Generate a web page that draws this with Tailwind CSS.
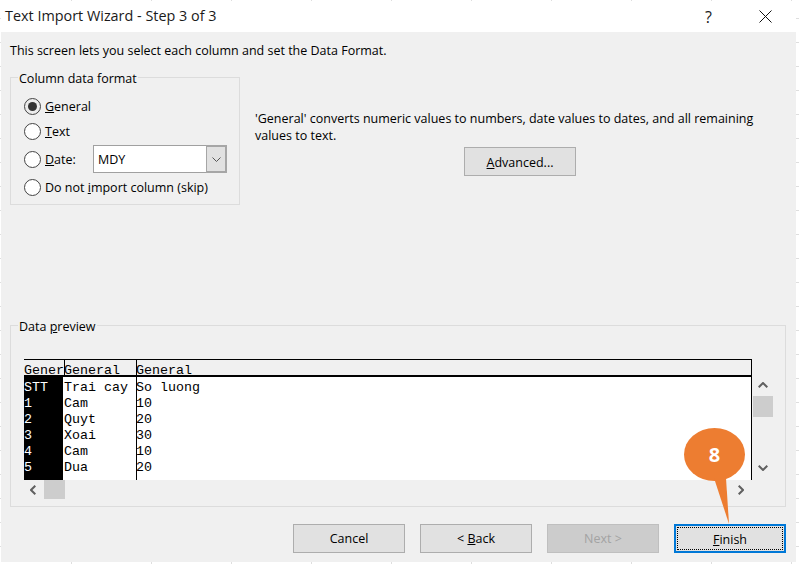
<!DOCTYPE html>
<html lang="en">
<head>
  <meta charset="UTF-8" />
  <title>Text Import Wizard - Step 3 of 3</title>
  <script src="https://cdn.jsdelivr.net/npm/@tailwindcss/browser@4"></script>
</head>
<body class="bg-white">
  <div class="relative w-[799px] h-[564px] overflow-hidden pl-px pt-px font-['Open_Sans',sans-serif] text-[12.5px] text-black [background-image:linear-gradient(#dedede_1px,transparent_1px),linear-gradient(90deg,#dedede_1px,transparent_1px)] [background-size:80px_24px] [background-position:71px_18px]">
    <div class="w-[795px] h-[561px] flex flex-col bg-[#f0f0f0]">

      <!-- Title bar -->
      <div class="h-[31px] shrink-0 bg-white flex items-center pl-1 text-[14.4px] text-[#1a1a1a]">
        <span class="-mt-[2px]">Text Import Wizard - Step 3 of 3</span>
        <span class="ml-auto mr-[47px] text-[16px] leading-none">?</span>
        <svg class="mr-6 w-[13px] h-[13px]" viewBox="0 0 13 13" fill="none" stroke="#111" stroke-width="1"><path d="M0.5 0.5L12.5 12.5M12.5 0.5L0.5 12.5"/></svg>
      </div>

      <div class="pl-[9px] pr-[10px]">
        <p class="h-[18px] mt-[10px] leading-[18px]">This screen lets you select each column and set the Data Format.</p>

        <div class="flex mt-[17px] h-[128px]">
          <!-- Column data format -->
          <div class="relative w-[230px] border border-[#dcdcdc] pl-[13px] pt-[16px]">
            <span class="absolute left-[7px] -top-[8px] px-px leading-[18px] bg-[#f0f0f0]">Column data format</span>

            <div class="flex items-center h-6 gap-1">
              <span class="w-[17px] h-[17px] rounded-full border-[1.5px] border-[#444] bg-[#ececec] flex items-center justify-center"><span class="w-[9px] h-[9px] rounded-full bg-[#333]"></span></span>
              <span class="pt-[2px]"><u>G</u>eneral</span>
            </div>
            <div class="flex items-center h-6 gap-1 mt-px">
              <span class="w-[17px] h-[17px] rounded-full border-[1.5px] border-[#444] bg-white"></span>
              <span class="pt-[2px]"><u>T</u>ext</span>
            </div>
            <div class="flex items-center h-7 gap-1 mt-[2px]">
              <span class="w-[17px] h-[17px] rounded-full border-[1.5px] border-[#444] bg-white"></span>
              <span class="w-[44px] pt-[2px]"><u>D</u>ate:</span>
              <div class="w-[134px] h-7 flex bg-white border border-[#a0a0a0]">
                <span class="flex-1 pl-1 leading-[28px]">MDY</span>
                <span class="w-[21px] bg-[#e1e1e1] border-2 border-l-1 border-[#a6a6a6] -my-px -mr-px flex items-center justify-center">
                  <svg class="w-[9px] h-[5px]" viewBox="0 0 9 5" fill="none" stroke="#555" stroke-width="1"><path d="M0.5 0.5L4.5 4.5L8.5 0.5"/></svg>
                </span>
              </div>
            </div>
            <div class="flex items-center h-6 gap-1 mt-[2px]">
              <span class="w-[17px] h-[17px] rounded-full border-[1.5px] border-[#444] bg-white"></span>
              <span class="pt-[2px]">Do not <u>i</u>mport column (skip)</span>
            </div>
          </div>

          <!-- General description -->
          <div class="ml-[15px] flex-1 pt-[33px]">
            <p class="leading-[17px]">'General' converts numeric values to numbers, date values to dates, and all remaining<br />values to text.</p>
            <button class="block w-[112px] h-[29px] mt-[3px] ml-[209px] pt-[4px] bg-[#e1e1e1] border border-[#adadad]"><u>A</u>dvanced...</button>
          </div>
        </div>

        <!-- Data preview -->
        <div class="relative mt-[120px] h-[182px] border border-[#dcdcdc] pl-[13px] pt-[33px]">
          <span class="absolute left-[7px] -top-[8px] px-px leading-[18px] bg-[#f0f0f0]">Data <u>p</u>review</span>
          <div class="flex">
            <div class="w-[728px] h-[121px] bg-white border-r border-black overflow-hidden font-['Liberation_Mono',monospace] text-[13.33px] leading-4">
              <div class="flex h-[18px] border-t border-b-2 border-black bg-[#f0f0f0]">
                <span class="w-10 shrink-0 pt-[3px]">Gener</span>
                <span class="w-[72px] border-l border-black pt-[3px] -indent-px">General</span>
                <span class="border-l border-black pt-[3px] -indent-px">General</span>
              </div>
              <div class="flex h-[103px]">
                <div class="w-[39px] bg-black text-white pt-[3px] overflow-hidden">
                  <div>STT</div><div>1</div><div>2</div><div>3</div><div>4</div><div>5</div>
                </div>
                <div class="w-[73px] ml-px border-r border-black pt-[3px]">
                  <div>Trai cay</div><div>Cam</div><div>Quyt</div><div>Xoai</div><div>Cam</div><div>Dua</div>
                </div>
                <div class="-ml-px pt-[3px]">
                  <div>So luong</div><div>10</div><div>20</div><div>30</div><div>10</div><div>20</div>
                </div>
              </div>
            </div>
            <!-- Vertical scrollbar -->
            <div class="w-[20px] ml-px h-[121px] flex flex-col items-center">
              <svg class="mt-[23px] w-[10px] h-[6px]" viewBox="0 0 10 6" fill="none" stroke="#606060" stroke-width="2"><path d="M0.7 5.3L5 1L9.3 5.3"/></svg>
              <div class="mt-[8px] w-full h-[21px] bg-[#cdcdcd]"></div>
              <svg class="mt-[48px] w-[10px] h-[6px]" viewBox="0 0 10 6" fill="none" stroke="#606060" stroke-width="2"><path d="M0.7 0.7L5 5L9.3 0.7"/></svg>
            </div>
          </div>
          <!-- Horizontal scrollbar -->
          <div class="flex items-center w-[728px] h-[19px]">
            <svg class="ml-[6px] w-[6px] h-[10px]" viewBox="0 0 6 10" fill="none" stroke="#606060" stroke-width="2"><path d="M5.3 0.7L1 5L5.3 9.3"/></svg>
            <div class="ml-[8px] w-[21px] h-full bg-[#cdcdcd]"></div>
            <svg class="ml-[673px] w-[6px] h-[10px]" viewBox="0 0 6 10" fill="none" stroke="#606060" stroke-width="2"><path d="M0.7 0.7L5 5L0.7 9.3"/></svg>
          </div>
        </div>

        <!-- Wizard buttons -->
        <div class="flex justify-end gap-[15px] mt-[17px]">
          <button class="w-[112px] h-[29px] pt-[2px] bg-[#e1e1e1] border border-[#adadad]">Cancel</button>
          <button class="w-[112px] h-[29px] pt-[2px] bg-[#e1e1e1] border border-[#adadad]">&lt; <u>B</u>ack</button>
          <button class="w-[112px] h-[29px] pt-[2px] bg-[#cccccc] border border-[#bfbfbf] text-[#a3a3a3]">Next &gt;</button>
          <button class="w-[112px] h-[29px] bg-[#e1e1e1] border-2 border-[#0078d7] p-px">
            <span class="block h-full leading-[23px] border border-dotted border-black"><u>F</u>inish</span>
          </button>
        </div>
      </div>
    </div>

    <!-- Step balloon -->
    <div class="absolute left-[684px] top-[428px] w-[61px] h-[97px]">
      <svg class="w-[61px] h-[97px]" viewBox="0 0 61 97"><ellipse cx="30.5" cy="26.5" rx="30.5" ry="26.5" fill="#ed7d31"/><path d="M30 50L42 50L45 96Z" fill="#ed7d31"/></svg>
      <span class="absolute left-0 top-[13px] w-[61px] text-center text-[20px] leading-[28px] font-bold text-white">8</span>
    </div>
  </div>
</body>
</html>
